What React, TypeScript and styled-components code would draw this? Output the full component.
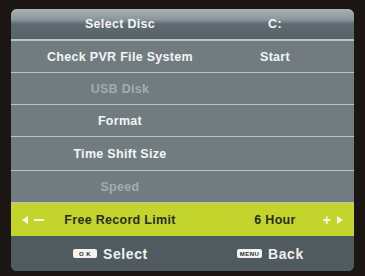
import type { FC } from 'react';
import styled, { createGlobalStyle } from 'styled-components';

const GlobalStyle = createGlobalStyle`
  html, body {
    margin: 0;
    padding: 0;
    background: #1b1513;
  }
  body {
    font-family: "Liberation Sans", Arial, sans-serif;
  }
`;

const Screen = styled.div`
  width: 365px;
  height: 276px;
  background: #1b1513;
  padding: 9px 11px 5px 11px;
  box-sizing: border-box;
`;

const Panel = styled.div`
  width: 343px;
  border-radius: 6px;
  overflow: hidden;
  background: #717c80;
  display: flex;
  flex-direction: column;
`;

const Header = styled.div`
  height: 30px;
  display: grid;
  grid-template-columns: 218px 92px 1fr;
  align-items: center;
  background: linear-gradient(
    to bottom,
    #a8b1b4 0%,
    #8c979b 35%,
    #5f6b71 50%,
    #56636a 100%
  );
  border-bottom: 2px solid #bcc4c7;
`;

const Row = styled.div<{ $h?: number; $active?: boolean }>`
  height: ${({ $h }) => $h ?? 31}px;
  display: grid;
  grid-template-columns: 218px 92px 1fr;
  align-items: center;
  background: ${({ $active }) => ($active ? '#c3d52c' : '#717c80')};
  border-bottom: ${({ $active }) => ($active ? 'none' : '1px solid #bac3c6')};
  position: relative;
`;

const Label = styled.span<{ $dim?: boolean; $dark?: boolean }>`
  text-align: center;
  font-weight: bold;
  font-size: 12.5px;
  letter-spacing: 0.3px;
  color: ${({ $dim, $dark }) => ($dark ? '#2a2d1c' : $dim ? '#a3abae' : '#f4f6f6')};
`;

const Value = styled(Label)``;

const Arrows = styled.span<{ $side: 'left' | 'right' }>`
  position: absolute;
  top: 0;
  bottom: 0;
  ${({ $side }) => ($side === 'left' ? 'left: 11px;' : 'right: 11px;')}
  display: flex;
  align-items: center;
  gap: 6px;
  color: #f6f8ec;
  font-weight: bold;
  font-size: 13px;
`;

const Tri = styled.span<{ $dir: 'left' | 'right' }>`
  width: 0;
  height: 0;
  border-top: 4px solid transparent;
  border-bottom: 4px solid transparent;
  ${({ $dir }) =>
    $dir === 'left'
      ? 'border-right: 6px solid #f6f8ec;'
      : 'border-left: 6px solid #f6f8ec;'}
`;

const Dash = styled.span`
  width: 10px;
  height: 2px;
  background: #f6f8ec;
`;

const Plus = styled.span`
  font-size: 14px;
  line-height: 1;
`;

const Footer = styled.div`
  height: 35px;
  background: #4f5b5f;
  display: grid;
  grid-template-columns: 218px 1fr;
  align-items: center;
`;

const Hint = styled.div<{ $pad: number }>`
  display: flex;
  align-items: center;
  gap: 6px;
  padding-left: ${({ $pad }) => $pad}px;
`;

const KeyBadge = styled.span<{ $w: number }>`
  width: ${({ $w }) => $w}px;
  height: 9px;
  border-radius: 2px;
  background: #f4f4f4;
  color: #2b2b2b;
  font-size: 6px;
  font-weight: bold;
  letter-spacing: 0.5px;
  display: flex;
  align-items: center;
  justify-content: center;
`;

const HintText = styled.span`
  color: #eef1f1;
  font-weight: bold;
  font-size: 14px;
  letter-spacing: 0.6px;
`;

const rows = [
  { label: 'Check PVR File System', value: 'Start', h: 31 },
  { label: 'USB Disk', value: '', dim: true, h: 31 },
  { label: 'Format', value: '', h: 31 },
  { label: 'Time Shift Size', value: '', h: 33 },
  { label: 'Speed', value: '', dim: true, h: 31 },
];

const App: FC = () => {
  return (
    <>
      <GlobalStyle />
      <Screen>
        <Panel>
          <Header>
            <Label>Select Disc</Label>
            <Value>C:</Value>
          </Header>
          {rows.map((r, i) => (
            <Row key={i} $h={r.h}>
              <Label $dim={r.dim}>{r.label}</Label>
              <Value>{r.value}</Value>
            </Row>
          ))}
          <Row $active $h={33}>
            <Arrows $side="left">
              <Tri $dir="left" />
              <Dash />
            </Arrows>
            <Label $dark>Free Record Limit</Label>
            <Value $dark>6 Hour</Value>
            <Arrows $side="right">
              <Plus>+</Plus>
              <Tri $dir="right" />
            </Arrows>
          </Row>
          <Footer>
            <Hint $pad={62}>
              <KeyBadge $w={24}>O K</KeyBadge>
              <HintText>Select</HintText>
            </Hint>
            <Hint $pad={8}>
              <KeyBadge $w={25}>MENU</KeyBadge>
              <HintText>Back</HintText>
            </Hint>
          </Footer>
        </Panel>
      </Screen>
    </>
  );
};

export default App;
